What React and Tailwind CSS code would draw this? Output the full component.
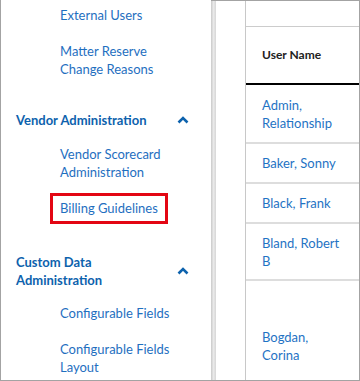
function Chevron() {
  return (
    <svg width="12" height="8" viewBox="0 0 12 8" className="shrink-0">
      <path d="M1.5 6.5 L6 2 L10.5 6.5" fill="none" stroke="#0d62ad" strokeWidth="2.6" strokeLinecap="butt" strokeLinejoin="miter" />
    </svg>
  );
}

export default function App() {
  const sub = "pl-[59px] text-[13px] leading-[18px] text-[#1f6fbf]";
  const head = "pl-[15px] pr-[22px] flex items-center justify-between text-[13px] leading-[18px] font-bold text-[#0d62ad]";
  const cell = "flex items-center px-4 text-[13px] leading-[18px] text-[#1f73c4]";
  return (
    <div className="w-[360px] h-[381px] overflow-hidden flex bg-white border-l border-r border-b border-[#a3a3a3] font-['Lato',sans-serif]">
      <div className="w-[210px] shrink-0 flex flex-col pt-[6px]">
        <div className={sub}>External Users</div>
        <div className={`${sub} mt-[18px]`}>Matter Reserve<br />Change Reasons</div>
        <div className={`${head} mt-[33px]`}>
          <span>Vendor Administration</span>
          <Chevron />
        </div>
        <div className={`${sub} mt-[16px]`}>Vendor Scorecard<br />Administration</div>
        <div className={`${sub} mt-[18px]`}>
          <span className="inline-block border-[3px] border-[#e30613] px-[7px] pt-[3px] pb-[4px] -ml-[10px] -my-[6px]">Billing Guidelines</span>
        </div>
        <div className={`${head} mt-[35px]`}>
          <span>Custom Data<br />Administration</span>
          <Chevron />
        </div>
        <div className={`${sub} mt-[15px]`}>Configurable Fields</div>
        <div className={`${sub} mt-[18px]`}>Configurable Fields<br />Layout</div>
      </div>
      <div className="flex-1 flex border-t border-[#a3a3a3]">
        <div className="w-[5px] shrink-0 bg-gradient-to-r from-[#c9c9c9] via-[#e9e9e9] to-[#d6d6d6]" />
        <div className="w-[29px] shrink-0" />
        <div className="flex-1 flex flex-col border-l border-[#c8c8c8]">
          <div className="h-[26px] shrink-0 border-b border-[#cccccc]" />
          <div className="h-[58px] shrink-0 flex items-center px-4 border-b-2 border-black text-[12px] font-bold text-[#222]">User Name</div>
          <div className={`${cell} h-[59px] shrink-0 border-b-2 border-[#dddddd]`}><span>Admin,<br />Relationship</span></div>
          <div className={`${cell} h-[40px] shrink-0 border-b-2 border-[#dddddd]`}>Baker, Sonny</div>
          <div className={`${cell} h-[40px] shrink-0 border-b-2 border-[#dddddd]`}>Black, Frank</div>
          <div className={`${cell} h-[57px] shrink-0 border-b-2 border-[#dddddd]`}><span>Bland, Robert<br />B</span></div>
          <div className={`${cell} h-[129px] shrink-0`}><span>Bogdan,<br />Corina</span></div>
        </div>
      </div>
    </div>
  );
}
